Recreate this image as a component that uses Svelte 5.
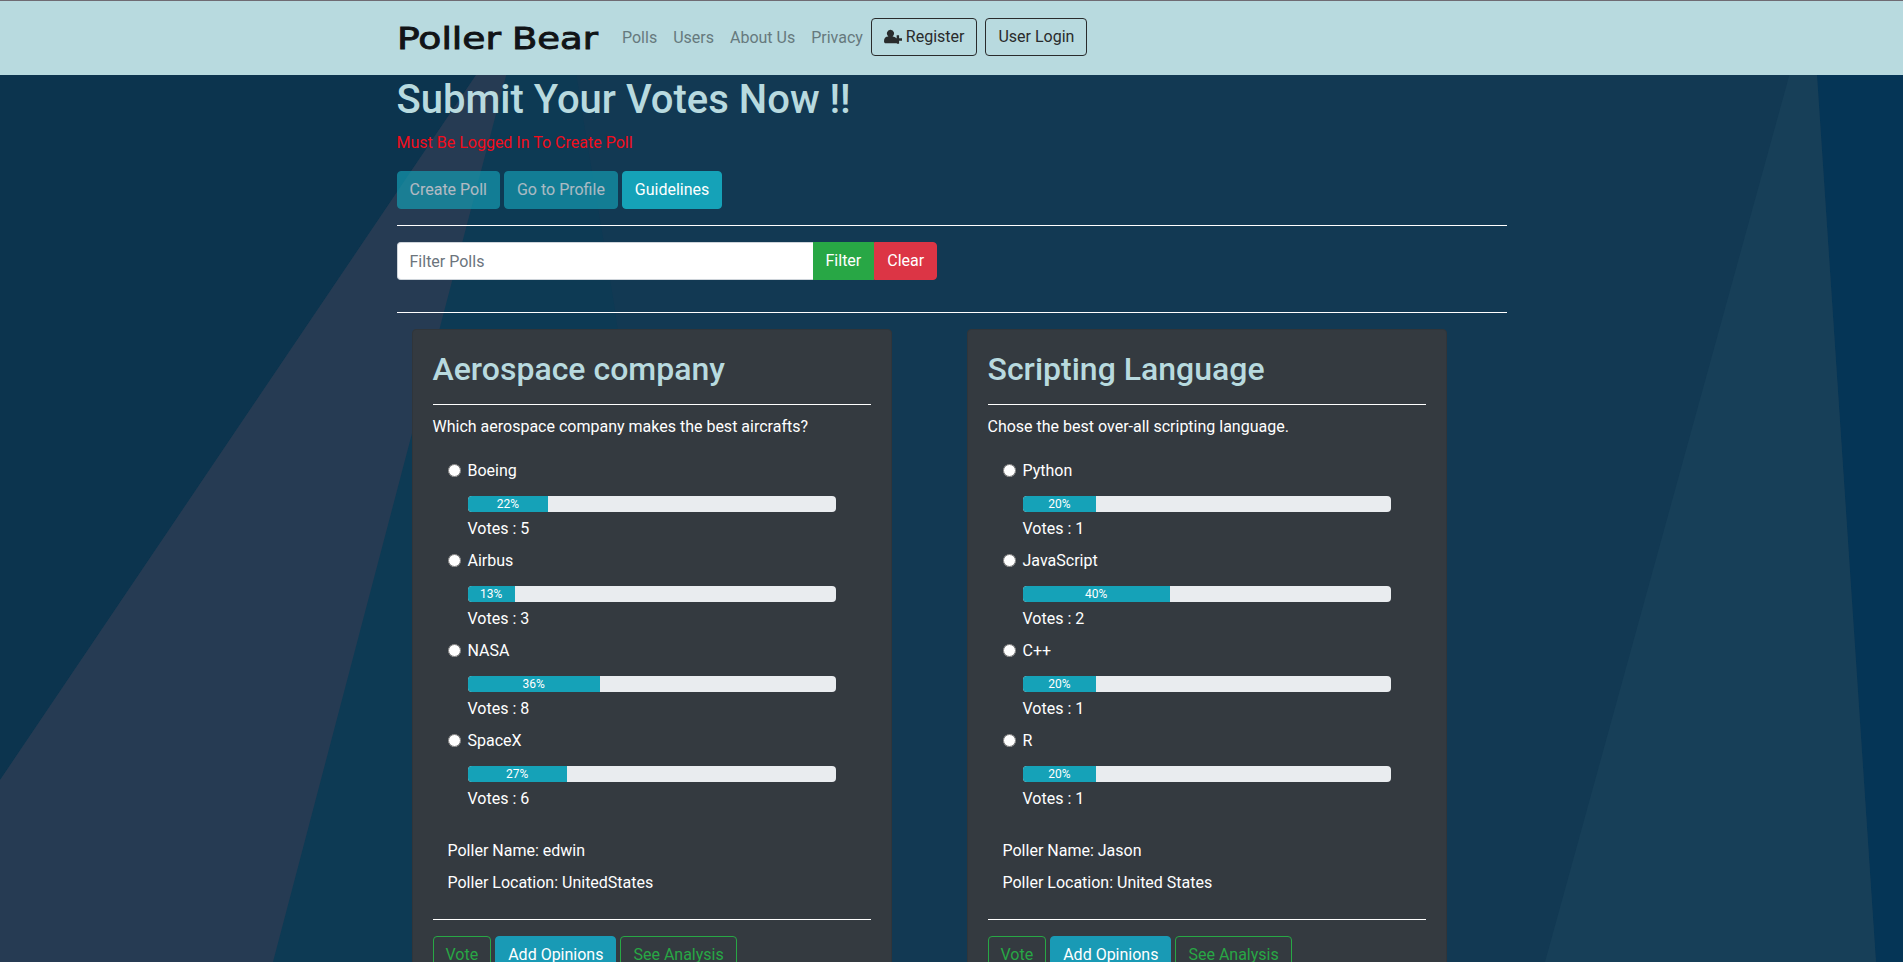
<script>
  const links = ['Polls', 'Users', 'About Us', 'Privacy'];

  const polls = [
    {
      title: 'Aerospace company',
      question: 'Which aerospace company makes the best aircrafts?',
      poller: 'edwin',
      location: 'UnitedStates',
      options: [
        { name: 'Boeing', percent: 22, width: 21.9, votes: 5 },
        { name: 'Airbus', percent: 13, width: 12.8, votes: 3 },
        { name: 'NASA', percent: 36, width: 35.9, votes: 8 },
        { name: 'SpaceX', percent: 27, width: 27, votes: 6 }
      ]
    },
    {
      title: 'Scripting Language',
      question: 'Chose the best over-all scripting language.',
      poller: 'Jason',
      location: 'United States',
      options: [
        { name: 'Python', percent: 20, width: 20, votes: 1 },
        { name: 'JavaScript', percent: 40, width: 40, votes: 2 },
        { name: 'C++', percent: 20, width: 20, votes: 1 },
        { name: 'R', percent: 20, width: 20, votes: 1 }
      ]
    }
  ];
</script>

<div class="page">
  <svg class="backdrop" viewBox="0 0 1903 962" preserveAspectRatio="none" aria-hidden="true">
    <rect width="1903" height="962" fill="#123953" />
    <polygon points="0,0 565,0 585,130 615,310 700,962 0,962" fill="#0d3a54" />
    <polygon points="0,0 526,0 476,75 0,780" fill="#0c344e" />
    <polygon points="526,0 476,75 0,780 0,962 273,962" fill="#263b53" />
    <polygon points="1812,0 1903,0 1903,962 1876,962" fill="#053556" />
    <polygon points="1810,0 1812,0 1876,962 1545,962" fill="#173f58" />
  </svg>

  <nav>
    <div class="container bar">
      <span class="brand">
        <svg viewBox="0 0 202 26" width="202" height="26">
          <text x="0" y="24.500" textLength="104" lengthAdjust="spacingAndGlyphs" class="wordmark">Poller</text>
          <text x="115" y="24.500" textLength="86" lengthAdjust="spacingAndGlyphs" class="wordmark">Bear</text>
        </svg>
      </span>
      <div class="links">
        {#each links as link}<a href="#top">{link}</a>{/each}
      </div>
      <button class="btn dark register">
        <svg width="18.500" height="15" viewBox="0 0 19 15" aria-hidden="true">
          <path fill="currentColor" d="M6.7.5a3.6 3.8 0 0 1 2.1 6.9c2.100.1 3.400 1 3.800 1.900H10v2.500h3v2c-.3.500-.8.700-1.600.7H2C.6 14.500 0 13.600 0 12.300 0 9.300 1.300 7.400 4.500 7.400A3.600 3.800 0 0 1 6.700.5zM13 6.100h2.500v3.200h3.200v2.500h-3.200V15H13v-3.200H9.900V9.300H13z" />
        </svg>
        Register
      </button>
      <button class="btn dark">User Login</button>
    </div>
  </nav>

  <main class="container">
    <h1>Submit Your Votes Now !!</h1>
    <p class="warning">Must Be Logged In To Create Poll</p>
    <div class="actions">
      <button class="btn info" disabled>Create Poll</button>
      <button class="btn info" disabled>Go to Profile</button>
      <button class="btn info">Guidelines</button>
    </div>
    <hr />
    <form class="filter">
      <input type="text" placeholder="Filter Polls" />
      <button type="button" class="btn success">Filter</button>
      <button type="button" class="btn danger">Clear</button>
    </form>
    <hr class="second" />

    <div class="polls">
      {#each polls as poll, p}
        <section class="card">
          <h2>{poll.title}</h2>
          <hr class="title-rule" />
          <p class="question">{poll.question}</p>
          <div class="options">
            {#each poll.options as option}
              <div class="option">
                <label><input type="radio" name={'poll' + p} /><span>{option.name}</span></label>
                <div class="progress">
                  <div class="fill" style:width={option.width + '%'}>{option.percent}%</div>
                </div>
                <div class="votes">Votes : {option.votes}</div>
              </div>
            {/each}
          </div>
          <div class="poller">
            <p>Poller Name: {poll.poller}</p>
            <p>Poller Location: {poll.location}</p>
          </div>
          <hr class="foot-rule" />
          <div class="actions">
            <button class="btn outline">Vote</button>
            <button class="btn info opinions">Add Opinions</button>
            <button class="btn outline">See Analysis</button>
          </div>
        </section>
      {/each}
    </div>
  </main>
</div>

<style>
  :global(body) {
    margin: 0;
    overflow: hidden;
  }

  .page, .page * {
    box-sizing: border-box;
  }

  .page {
    position: relative;
    height: 962px;
    overflow: hidden;
    font: 400 16px/24px Roboto, sans-serif;
    color: #fff;
  }

  .backdrop {
    position: absolute;
    inset: 0;
    width: 100%;
    height: 100%;
  }

  nav {
    position: relative;
    height: 75px;
    background: #b8dadf;
    border-top: 1px solid #6f6b73;
  }

  .container {
    width: 1110px;
    margin: 0 auto;
  }

  .bar {
    display: flex;
    align-items: center;
    height: 72px;
  }

  .brand {
    display: flex;
    width: 217.5px;
  }

  .brand svg {
    overflow: visible;
  }

  .wordmark {
    font: 400 30px "DejaVu Sans", sans-serif;
    fill: #111417;
    stroke: #111417;
    stroke-width: .9px;
  }

  .links {
    display: flex;
    padding-top: 2px;
  }

  .links a {
    padding: 0 8px;
    color: #66797d;
    text-decoration: none;
  }

  .btn {
    height: 38px;
    padding: 6px 12px;
    border: 1px solid transparent;
    border-radius: 4px;
    background: transparent;
    color: #fff;
    font: 400 16px/24px Roboto, sans-serif;
    white-space: nowrap;
  }

  .btn.dark {
    border-color: #292b2c;
    color: #292b2c;
    margin-right: 8px;
  }

  .register svg {
    vertical-align: -2px;
    margin-right: -.5px;
  }

  .btn.info {
    background: #15a2b8;
    border-color: #15a2b8;
  }

  .btn.info:disabled {
    opacity: .65;
  }

  .btn.opinions {
    background: #199ab5;
    border-color: #199ab5;
  }

  .btn.outline {
    border-color: #28a745;
    color: #28a745;
  }

  main {
    position: relative;
  }

  h1 {
    margin: 0 0 8px;
    padding-top: 1px;
    height: 48px;
    font-size: 40px;
    line-height: 48px;
    font-weight: 500;
    color: #b8dadf;
  }

  .warning {
    margin: 0 0 16px;
    color: #f20d1c;
  }

  .actions {
    display: flex;
    gap: 4px;
  }

  hr {
    margin: 16px 0;
    border: 0;
    border-top: 1px solid #fff;
  }

  .filter {
    display: flex;
  }

  .filter input {
    width: 416px;
    height: 38px;
    padding: 6px 12px;
    border: 1px solid #ced4da;
    border-right: 0;
    border-radius: 4px 0 0 4px;
    background: #fff;
    font: 400 16px/24px Roboto, sans-serif;
  }

  .filter input::placeholder {
    color: #6c757d;
    opacity: 1;
  }

  .btn.success {
    background: #28a745;
    border-radius: 0;
    border-color: #28a745;
  }

  .btn.danger {
    background: #dc3545;
    border-color: #dc3545;
    border-radius: 0 4px 4px 0;
  }

  hr.second {
    margin-top: 32px;
  }

  .polls {
    display: grid;
    grid-template-columns: 480px 480px;
    column-gap: 75px;
    padding-left: 15px;
  }

  .card {
    height: 720px;
    padding: 20px;
    background: #343a40;
    border: 1px solid #30353a;
    border-radius: 4px;
  }

  h2 {
    margin: 0;
    font-size: 32px;
    line-height: 38px;
    font-weight: 500;
    color: #b8dadf;
  }

  hr.title-rule {
    margin: 16px 0 10px;
  }

  .question {
    margin: 0;
  }

  .options {
    padding: 20px 15px 0;
  }

  .option {
    height: 90px;
    padding: 0 20px;
  }

  .option label {
    display: flex;
    align-items: center;
    height: 24px;
    margin-left: -20px;
  }

  .option input {
    width: 13px;
    height: 13px;
    margin: 0 7px 1px 0;
  }

  .progress {
    height: 16px;
    margin: 13px 0 5px;
    border-radius: 4px;
    overflow: hidden;
    background: #e9ecef;
  }

  .fill {
    height: 100%;
    background: #15a2b8;
    font-size: 12px;
    line-height: 16px;
    text-align: center;
  }

  .poller {
    padding: 20px 15px 0;
  }

  .poller p {
    margin: 0 0 8px;
  }

  hr.foot-rule {
    margin: 24px 0 16px;
  }
</style>
